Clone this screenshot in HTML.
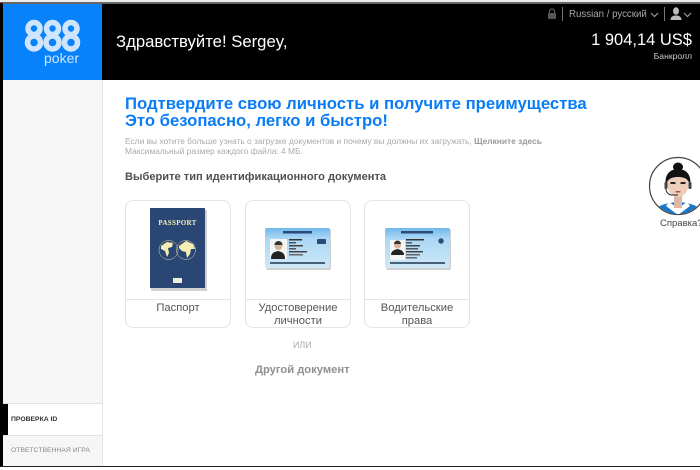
<!DOCTYPE html>
<html><head><meta charset="utf-8">
<style>
html,body{margin:0;padding:0;background:#fff;}
body{width:700px;height:470px;position:relative;overflow:hidden;font-family:"Liberation Sans","Noto Sans CJK JP",sans-serif;}
.a{position:absolute;white-space:nowrap;}
.card{position:absolute;top:200px;width:106px;height:128px;box-sizing:border-box;border:1px solid #e4e4e4;border-radius:8px;background:#fff;}
.card .ln{position:absolute;left:0;right:0;top:98px;height:1px;background:#e6e6e6;}
.card .t{position:absolute;left:0;right:0;top:101px;text-align:center;font-size:11.200px;line-height:12.500px;color:#555;}
</style></head><body>
<div class="a" style="left:0;top:0;width:700px;height:3px;background:#eee;"></div>
<div class="a" style="left:0;top:2px;width:700px;height:2px;background:#666;"></div>
<div class="a" style="left:0;top:3px;width:3px;height:464px;background:#000;"></div>
<div class="a" style="left:0;top:466px;width:700px;height:1px;background:#222;"></div>
<div class="a" style="left:3px;top:4px;width:99px;height:76px;background:#0782fb;"></div>
<div class="a" style="left:102px;top:4px;width:598px;height:76px;background:#000;"></div>
<div class="a" style="left:3px;top:80px;width:99px;height:386px;background:#f6f6f6;"></div>
<div class="a" style="left:102px;top:80px;width:1px;height:386px;background:#e2e2e2;"></div>

<!-- logo -->
<svg class="a" style="left:24px;top:19px;" width="58" height="34" viewBox="0 0 58 34" fill="none" stroke="#cfe5fe" stroke-width="5.500">
<circle cx="10" cy="9.500" r="6"/><circle cx="10" cy="23.500" r="6.500"/>
<circle cx="28.500" cy="9.500" r="6"/><circle cx="28.500" cy="23.500" r="6.500"/>
<circle cx="47" cy="9.500" r="6"/><circle cx="47" cy="23.500" r="6.500"/>
</svg>
<div class="a" style="left:44px;top:51px;font-size:14px;line-height:14px;color:#cfe5fe;">poker</div>

<div class="a" style="left:116px;top:33px;font-size:16.700px;line-height:18px;color:#fff;">Здравствуйте! Sergey,</div>

<!-- top right -->
<svg class="a" style="left:547px;top:8px;" width="10" height="12" viewBox="0 0 10 12"><path d="M2.500 5V3.500a2.500 2.500 0 0 1 5 0V5" fill="none" stroke="#555" stroke-width="1.300"/><rect x="1" y="5" width="8" height="6" rx="1" fill="#555"/></svg>
<div class="a" style="left:562px;top:7px;width:1px;height:14px;background:#777;"></div>
<div class="a" style="left:569px;top:9px;font-size:9.700px;line-height:12px;color:#a8a8a8;">Russian / русский</div>
<svg class="a" style="left:650px;top:12px;" width="9" height="6" viewBox="0 0 9 6"><path d="M1 1l3.500 3.500L8 1" fill="none" stroke="#999" stroke-width="1.200"/></svg>
<div class="a" style="left:664px;top:7px;width:1px;height:14px;background:#777;"></div>
<svg class="a" style="left:670px;top:7px;" width="12" height="13" viewBox="0 0 12 13"><ellipse cx="6" cy="4" rx="3" ry="3.800" fill="#bbb"/><path d="M0.500 13c0-3 2-4 4-4.500h3c2 .5 4 1.500 4 4.500z" fill="#bbb"/></svg>
<svg class="a" style="left:683px;top:12px;" width="9" height="6" viewBox="0 0 9 6"><path d="M1 1l3.500 3.500L8 1" fill="none" stroke="#999" stroke-width="1.200"/></svg>
<div class="a" style="right:8px;top:31px;font-size:16.500px;line-height:18px;color:#fff;">1 904,14 US$</div>
<div class="a" style="right:8px;top:51px;font-size:8.600px;line-height:11px;color:#ccc;">Банкролл</div>

<!-- content -->
<div class="a" style="left:125px;top:95px;font-size:16.700px;line-height:17px;font-weight:bold;color:#0a7cf5;">Подтвердите свою личность и получите преимущества<br>Это безопасно, легко и быстро!</div>
<div class="a" style="left:125px;top:136px;font-size:8.400px;line-height:10px;color:#aaa;">Если вы хотите больше узнать о загрузке документов и почему вы должны их загружать, <b style="color:#999">Щелкните здесь</b><br>Максимальный размер каждого файла: 4 МБ.</div>
<div class="a" style="left:125px;top:170px;font-size:11.100px;line-height:14px;font-weight:bold;color:#505050;">Выберите тип идентификационного документа</div>

<!-- cards -->
<div class="card" style="left:125px;">
<div class="ln"></div><div class="t">Паспорт</div>
</div>
<svg class="a" style="left:150px;top:208px;" width="58" height="84" viewBox="0 0 58 84">
<rect x="1" y="2" width="56" height="81" fill="#999" opacity=".45"/>
<rect x="0" y="0" width="55" height="80" fill="#2a4674"/>
<text x="27.500" y="17" text-anchor="middle" font-family="Liberation Serif,serif" font-size="7" font-weight="bold" fill="#f7eeb5" letter-spacing=".3">PASSPORT</text>
<circle cx="18.500" cy="42" r="9.500" fill="none" stroke="#e8dda0" stroke-width=".5"/>
<circle cx="36" cy="42" r="9.500" fill="none" stroke="#e8dda0" stroke-width=".5"/>
<path d="M11 38l6-4 6 1-1 4-4 1 1 5-2 4-2-6-4-2z" fill="#f7eeb5"/>
<path d="M29 38l7-5 7 3 2 5-4 0-1 5-3 4-1-6-4-1-3-3z" fill="#f7eeb5"/>
<rect x="23" y="70" width="9" height="5" fill="#f0eedd"/>
</svg>

<div class="card" style="left:245px;">
<div class="ln"></div><div class="t">Удостоверение<br>личности</div>
</div>
<svg class="a" style="left:265px;top:228px;" width="67" height="42" viewBox="0 0 67 42">
<defs><linearGradient id="g" x1="0" y1="0" x2="0" y2="1"><stop offset="0" stop-color="#6fb8ec"/><stop offset=".25" stop-color="#a9d6f4"/><stop offset="1" stop-color="#cfe9f7"/></linearGradient></defs>
<rect x="1" y="1" width="65" height="41" rx="2" fill="#888" opacity=".4"/>
<rect x="0" y="0" width="65" height="40" rx="2" fill="url(#g)"/>
<rect x="18" y="3" width="29" height="2.500" fill="#2c4a78"/>
<rect x="5" y="11" width="17" height="20" fill="#f4f6f6"/>
<path d="M6 31c0-6 3-7 7-8 4 1 7 2 7 8z" fill="#222"/>
<circle cx="13.500" cy="18" r="4" fill="#d8b49a"/><path d="M9.500 17a4 4 0 0 1 8 0z" fill="#333"/>
<rect x="24" y="11" width="13" height="1.500" fill="#333"/><rect x="24" y="14" width="7" height="1.500" fill="#555"/><rect x="24" y="17" width="14" height="1.500" fill="#444"/><rect x="24" y="20" width="7" height="1.500" fill="#555"/><rect x="24" y="23" width="18" height="1.500" fill="#444"/><rect x="24" y="26" width="14" height="1.500" fill="#666"/>
<rect x="52" y="11" width="9" height="5" rx="1" fill="#2c4a78"/>
<rect x="5" y="34" width="55" height="2" fill="#4a5f78"/>
</svg>

<div class="card" style="left:364px;">
<div class="ln"></div><div class="t">Водительские<br>права</div>
</div>
<svg class="a" style="left:385px;top:228px;" width="67" height="42" viewBox="0 0 67 42">
<rect x="1" y="1" width="65" height="41" rx="2" fill="#888" opacity=".4"/>
<rect x="0" y="0" width="65" height="40" rx="2" fill="url(#g)"/>
<rect x="16" y="3" width="32" height="2.500" fill="#2c4a78"/>
<rect x="5" y="12" width="15" height="20" fill="#f4f6f6"/>
<path d="M6 27c0-4 3-5 6.500-6 3.500 1 6.500 2 6.500 6z" fill="#222"/>
<circle cx="12.500" cy="17" r="3.500" fill="#d8b49a"/><path d="M9 16a3.500 3.500 0 0 1 7 0z" fill="#333"/>
<rect x="21" y="11" width="18" height="1.500" fill="#333"/><rect x="21" y="14" width="6" height="1.500" fill="#555"/><rect x="21" y="17" width="14" height="1.500" fill="#444"/><rect x="21" y="20" width="12" height="1.500" fill="#555"/><rect x="21" y="23" width="17" height="1.500" fill="#444"/><rect x="21" y="26" width="14" height="1.500" fill="#666"/><rect x="21" y="29" width="11" height="1.500" fill="#666"/>
<circle cx="56" cy="13" r="2.700" fill="#2c4a78"/>
<rect x="5" y="34" width="55" height="2" fill="#4a5f78"/>
</svg>

<div class="a" style="left:293px;top:340px;font-size:8.800px;line-height:11px;color:#aaa;">ИЛИ</div>
<div class="a" style="left:255px;top:363px;font-size:11.200px;line-height:14px;font-weight:bold;color:#909090;">Другой документ</div>

<!-- help -->
<svg class="a" style="left:648px;top:156px;" width="52" height="60" viewBox="0 0 52 60">
<circle cx="30" cy="30" r="28.500" fill="#fff" stroke="#444" stroke-width="1.200"/>
<clipPath id="c"><circle cx="30" cy="30" r="28"/></clipPath>
<g clip-path="url(#c)">
<g transform="translate(0,3)">
<path d="M3 58c2-12 16-14 27-15 11 1 24 3 27 15z" fill="#1877c9"/>
<path d="M21 43l9 6 9-6 3 4-12 9-12-9z" fill="#fff"/>
<rect x="26" y="34" width="8" height="15" fill="#dcb8a6"/>
<ellipse cx="30" cy="25" rx="10.500" ry="13" fill="#efcdbb"/>
<path d="M18 27c-2-10 3-17 12-17s14 7 12 17c-1-6-4-9-12-9s-11 3-12 9z" fill="#111"/>
<ellipse cx="30" cy="8" rx="5" ry="4.500" fill="#111"/>
<rect x="22.500" y="23" width="5" height="2" fill="#222"/><rect x="32.500" y="23" width="5" height="2" fill="#222"/>
<rect x="27.500" y="32" width="5" height="1.500" fill="#a55"/>
<path d="M18 26c-1 5 1 9 5 10l7 0" fill="none" stroke="#222" stroke-width="1"/>
<rect x="16.500" y="23" width="3" height="7" rx="1" fill="#444"/>
<rect x="40.500" y="23" width="3" height="7" rx="1" fill="#444"/>
</g>
</g>
</svg>
<div class="a" style="left:660px;top:218px;font-size:9.500px;line-height:11px;color:#444;">Справка?</div>

<!-- sidebar items -->
<div class="a" style="left:3px;top:403px;width:99px;height:1px;background:#e2e2e2;"></div>
<div class="a" style="left:3px;top:404px;width:99px;height:31px;background:#fff;"></div>
<div class="a" style="left:3px;top:404px;width:5px;height:31px;background:#000;"></div>
<div class="a" style="left:3px;top:435px;width:99px;height:1px;background:#e2e2e2;"></div>
<div class="a" style="left:11px;top:415px;font-size:6.800px;line-height:9px;font-weight:bold;color:#333;">ПРОВЕРКА ID</div>
<div class="a" style="left:11px;top:446px;font-size:6.800px;line-height:9px;color:#888;">ОТВЕТСТВЕННАЯ ИГРА</div>
</body></html>
